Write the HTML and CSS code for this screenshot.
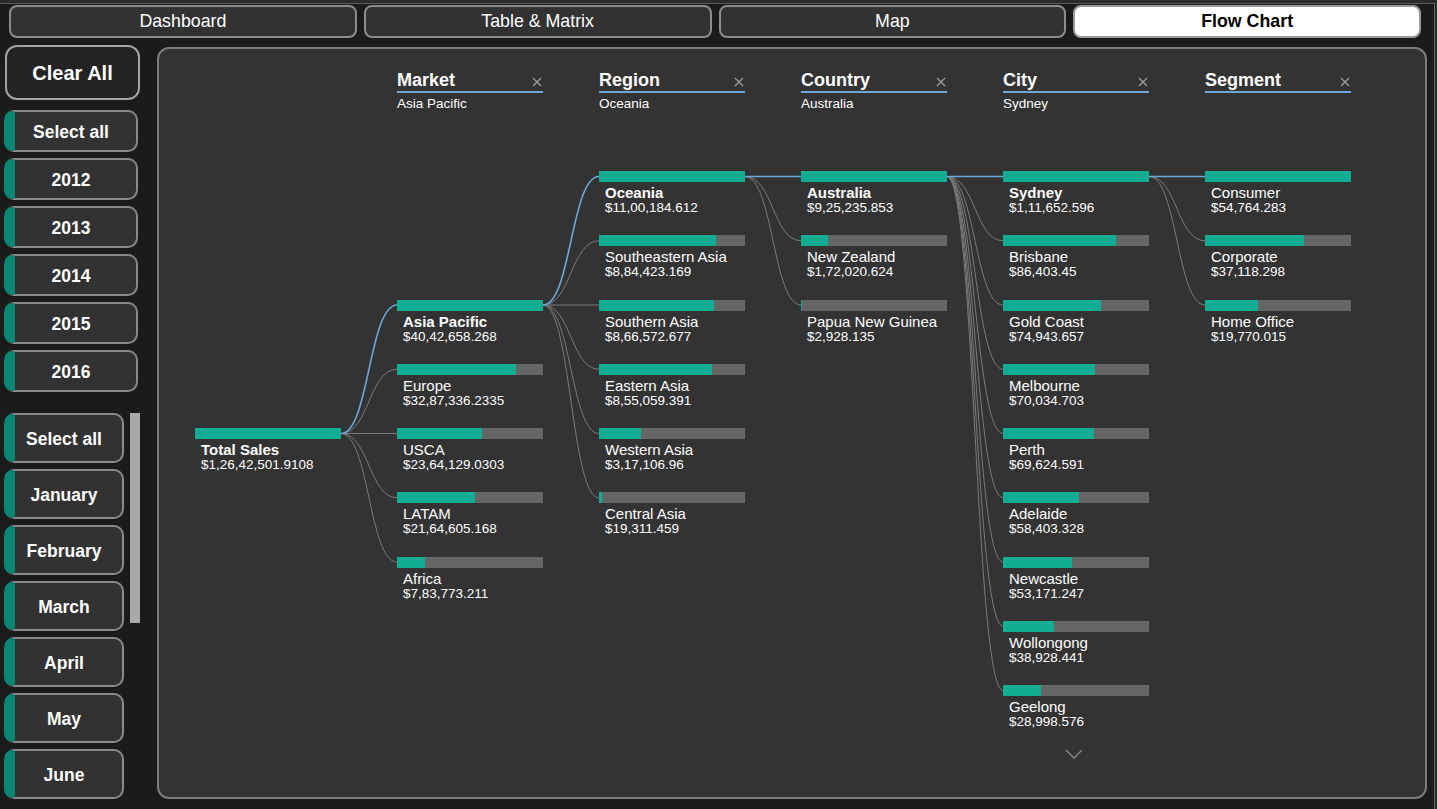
FILE: index.html
```html
<!DOCTYPE html>
<html>
<head>
<meta charset="utf-8">
<link rel="stylesheet" href="styles.css">
</head>
<body>
<div class="app">
  <nav class="tabs">
    <div class="tab">Dashboard</div>
    <div class="tab">Table &amp; Matrix</div>
    <div class="tab">Map</div>
    <div class="tab active">Flow Chart</div>
  </nav>
  <div class="main">
    <aside class="sidebar">
      <div class="clear">Clear All</div>
      <div class="years">
        <div class="slicer year">Select all</div>
        <div class="slicer year">2012</div>
        <div class="slicer year">2013</div>
        <div class="slicer year">2014</div>
        <div class="slicer year">2015</div>
        <div class="slicer year">2016</div>
      </div>
      <div class="months-wrap">
        <div class="months">
          <div class="slicer month">Select all</div>
          <div class="slicer month">January</div>
          <div class="slicer month">February</div>
          <div class="slicer month">March</div>
          <div class="slicer month">April</div>
          <div class="slicer month">May</div>
          <div class="slicer month">June</div>
        </div>
        <div class="scrolltrack"><div class="thumb"></div></div>
      </div>
    </aside>
    <section class="panel">
      <div class="headers">
        <div></div>
        <div class="hdr"><div class="hdr-top"><span>Market</span><svg class="x" viewBox="0 0 10 10"><path d="M1 1L9 9M9 1L1 9"/></svg></div><div class="hdr-sub">Asia Pacific</div></div>
        <div class="hdr"><div class="hdr-top"><span>Region</span><svg class="x" viewBox="0 0 10 10"><path d="M1 1L9 9M9 1L1 9"/></svg></div><div class="hdr-sub">Oceania</div></div>
        <div class="hdr"><div class="hdr-top"><span>Country</span><svg class="x" viewBox="0 0 10 10"><path d="M1 1L9 9M9 1L1 9"/></svg></div><div class="hdr-sub">Australia</div></div>
        <div class="hdr"><div class="hdr-top"><span>City</span><svg class="x" viewBox="0 0 10 10"><path d="M1 1L9 9M9 1L1 9"/></svg></div><div class="hdr-sub">Sydney</div></div>
        <div class="hdr"><div class="hdr-top"><span>Segment</span><svg class="x" viewBox="0 0 10 10"><path d="M1 1L9 9M9 1L1 9"/></svg></div><div class="hdr-sub"></div></div>
      </div>
      <div class="chart">
        <svg class="links" width="1266" height="680" viewBox="0 0 1266 680">
          <g class="grey">
            <path d="M182 314.5C210 314.5 210 250.25 238 250.25"/>
            <path d="M182 314.5L238 314.5"/>
            <path d="M182 314.5C210 314.5 210 378.75 238 378.75"/>
            <path d="M182 314.5C210 314.5 210 443 238 443"/>
            <path d="M384 186C412 186 412 121.75 440 121.75"/>
            <path d="M384 186L440 186"/>
            <path d="M384 186C412 186 412 250.25 440 250.25"/>
            <path d="M384 186C412 186 412 314.5 440 314.5"/>
            <path d="M384 186C412 186 412 378.75 440 378.75"/>
            <path d="M586 57.5C614 57.5 614 121.75 642 121.75"/>
            <path d="M586 57.5C614 57.5 614 186 642 186"/>
            <path d="M788 57.5C816 57.5 816 121.75 844 121.75"/>
            <path d="M788 57.5C816 57.5 816 186 844 186"/>
            <path d="M788 57.5C816 57.5 816 250.25 844 250.25"/>
            <path d="M788 57.5C816 57.5 816 314.5 844 314.5"/>
            <path d="M788 57.5C816 57.5 816 378.75 844 378.75"/>
            <path d="M788 57.5C816 57.5 816 443 844 443"/>
            <path d="M788 57.5C816 57.5 816 507.25 844 507.25"/>
            <path d="M788 57.5C816 57.5 816 571.5 844 571.5"/>
            <path d="M990 57.5C1018 57.5 1018 121.75 1046 121.75"/>
            <path d="M990 57.5C1018 57.5 1018 186 1046 186"/>
          </g>
          <g class="blue">
            <path d="M182 314.5C210 314.5 210 186 238 186"/>
            <path d="M384 186C412 186 412 57.5 440 57.5"/>
            <path d="M586 57.5L642 57.5"/>
            <path d="M788 57.5L844 57.5"/>
            <path d="M990 57.5L1046 57.5"/>
          </g>
        </svg>
        <div class="col col-total">
          <div class="node sel"><div class="bar"><div class="fill" style="width:100%"></div></div><div class="name">Total Sales</div><div class="val">$1,26,42,501.9108</div></div>
        </div>
        <div class="col col-market">
          <div class="node sel"><div class="bar"><div class="fill" style="width:100%"></div></div><div class="name">Asia Pacific</div><div class="val">$40,42,658.268</div></div>
          <div class="node"><div class="bar"><div class="fill" style="width:81.3%"></div></div><div class="name">Europe</div><div class="val">$32,87,336.2335</div></div>
          <div class="node"><div class="bar"><div class="fill" style="width:58.5%"></div></div><div class="name">USCA</div><div class="val">$23,64,129.0303</div></div>
          <div class="node"><div class="bar"><div class="fill" style="width:53.5%"></div></div><div class="name">LATAM</div><div class="val">$21,64,605.168</div></div>
          <div class="node"><div class="bar"><div class="fill" style="width:19.4%"></div></div><div class="name">Africa</div><div class="val">$7,83,773.211</div></div>
        </div>
        <div class="col">
          <div class="node sel"><div class="bar"><div class="fill" style="width:100%"></div></div><div class="name">Oceania</div><div class="val">$11,00,184.612</div></div>
          <div class="node"><div class="bar"><div class="fill" style="width:80.4%"></div></div><div class="name">Southeastern Asia</div><div class="val">$8,84,423.169</div></div>
          <div class="node"><div class="bar"><div class="fill" style="width:78.8%"></div></div><div class="name">Southern Asia</div><div class="val">$8,66,572.677</div></div>
          <div class="node"><div class="bar"><div class="fill" style="width:77.7%"></div></div><div class="name">Eastern Asia</div><div class="val">$8,55,059.391</div></div>
          <div class="node"><div class="bar"><div class="fill" style="width:28.8%"></div></div><div class="name">Western Asia</div><div class="val">$3,17,106.96</div></div>
          <div class="node"><div class="bar"><div class="fill" style="width:1.8%"></div></div><div class="name">Central Asia</div><div class="val">$19,311.459</div></div>
        </div>
        <div class="col">
          <div class="node sel"><div class="bar"><div class="fill" style="width:100%"></div></div><div class="name">Australia</div><div class="val">$9,25,235.853</div></div>
          <div class="node"><div class="bar"><div class="fill" style="width:18.6%"></div></div><div class="name">New Zealand</div><div class="val">$1,72,020.624</div></div>
          <div class="node"><div class="bar"><div class="fill" style="width:0.3%"></div></div><div class="name">Papua New Guinea</div><div class="val">$2,928.135</div></div>
        </div>
        <div class="col">
          <div class="node sel"><div class="bar"><div class="fill" style="width:100%"></div></div><div class="name">Sydney</div><div class="val">$1,11,652.596</div></div>
          <div class="node"><div class="bar"><div class="fill" style="width:77.4%"></div></div><div class="name">Brisbane</div><div class="val">$86,403.45</div></div>
          <div class="node"><div class="bar"><div class="fill" style="width:67.1%"></div></div><div class="name">Gold Coast</div><div class="val">$74,943.657</div></div>
          <div class="node"><div class="bar"><div class="fill" style="width:62.7%"></div></div><div class="name">Melbourne</div><div class="val">$70,034.703</div></div>
          <div class="node"><div class="bar"><div class="fill" style="width:62.4%"></div></div><div class="name">Perth</div><div class="val">$69,624.591</div></div>
          <div class="node"><div class="bar"><div class="fill" style="width:52.3%"></div></div><div class="name">Adelaide</div><div class="val">$58,403.328</div></div>
          <div class="node"><div class="bar"><div class="fill" style="width:47.6%"></div></div><div class="name">Newcastle</div><div class="val">$53,171.247</div></div>
          <div class="node"><div class="bar"><div class="fill" style="width:34.9%"></div></div><div class="name">Wollongong</div><div class="val">$38,928.441</div></div>
          <div class="node"><div class="bar"><div class="fill" style="width:26%"></div></div><div class="name">Geelong</div><div class="val">$28,998.576</div></div>
          <div class="more"><svg width="18" height="10" viewBox="0 0 18 10"><path d="M1 1L9 9L17 1"/></svg></div>
        </div>
        <div class="col">
          <div class="node"><div class="bar"><div class="fill" style="width:100%"></div></div><div class="name">Consumer</div><div class="val">$54,764.283</div></div>
          <div class="node"><div class="bar"><div class="fill" style="width:67.8%"></div></div><div class="name">Corporate</div><div class="val">$37,118.298</div></div>
          <div class="node"><div class="bar"><div class="fill" style="width:36.1%"></div></div><div class="name">Home Office</div><div class="val">$19,770.015</div></div>
        </div>
      </div>
    </section>
  </div>
</div>
</body>
</html>
```

FILE: styles.css
```css
* { box-sizing: border-box; }
html, body {
  margin: 0;
  padding: 0;
  background: #2b2b2b;
  font-family: "Liberation Sans", Arial, sans-serif;
  color: #fff;
}
.app {
  margin-top: 3px;
  width: 1435px;
  height: 806px;
  background: #1b1b1b;
  border-top: 1px solid #5c5c5c;
  border-right: 1px solid #6a6a6a;
  overflow: hidden;
}
.tabs {
  display: flex;
  gap: 7px;
  width: 1421px;
  padding: 1px 0 0 9px;
}
.tab {
  flex: 1;
  height: 33px;
  border: 2px solid #8d8d8d;
  border-radius: 8px;
  background: #323232;
  display: flex;
  align-items: center;
  justify-content: center;
  font-size: 17.8px;
  color: #fff;
}
.tab.active {
  background: #fff;
  color: #000;
  font-weight: bold;
  border-color: #9a9a9a;
}
.main {
  display: flex;
  padding-left: 4px;
  margin-top: 7px;
}
.sidebar {
  width: 136px;
  display: flex;
  flex-direction: column;
}
.clear {
  margin-left: 1px;
  width: 135px;
  height: 55px;
  border: 2px solid #a3a3a3;
  border-radius: 12px;
  background: #232323;
  display: flex;
  align-items: center;
  justify-content: center;
  padding-top: 1px;
  font-weight: bold;
  font-size: 20px;
}
.years {
  margin-top: 10px;
  display: flex;
  flex-direction: column;
  gap: 6px;
}
.slicer {
  background: #323232;
  border: 2px solid #8a8a8a;
  border-left: 11px solid #0c8571;
  border-radius: 10px;
  display: flex;
  align-items: center;
  justify-content: center;
  padding: 2px 9px 0 0;
  font-weight: bold;
  font-size: 17.5px;
  flex-shrink: 0;
}
.year {
  width: 134px;
  height: 42px;
}
.months-wrap {
  margin-top: 21px;
  display: flex;
  gap: 6px;
  height: 390px;
  overflow: hidden;
}
.months {
  display: flex;
  flex-direction: column;
  gap: 6px;
}
.month {
  width: 120px;
  height: 50px;
}
.scrolltrack {
  width: 10px;
}
.thumb {
  width: 10px;
  height: 210px;
  background: #a9a9a9;
}
.panel {
  margin-left: 17px;
  margin-top: 2px;
  width: 1270px;
  height: 752px;
  border: 2px solid #7c7c7c;
  border-radius: 12px;
  background: #333333;
  padding: 20px 0 0 36px;
}
.headers {
  display: grid;
  grid-template-columns: repeat(6, 146px);
  column-gap: 56px;
}
.hdr-top {
  height: 24px;
  border-bottom: 2px solid #6ea6d8;
  display: flex;
  justify-content: space-between;
  align-items: center;
  font-weight: bold;
  font-size: 18px;
}
.hdr-top span { line-height: 22px; }
.x {
  width: 10px;
  height: 10px;
  margin-right: 1px;
  margin-top: 4px;
  fill: none;
  stroke: #999;
  stroke-width: 1.4;
}
.hdr-sub {
  margin-top: 3px;
  font-size: 13.5px;
  line-height: 15px;
  height: 15px;
}
.chart {
  position: relative;
  margin-top: 8px;
  margin-left: -36px;
  padding-left: 36px;
  display: flex;
  gap: 56px;
  height: 675px;
}
.links {
  position: absolute;
  left: 0;
  top: 0;
  overflow: visible;
}
.links path { fill: none; }
.grey path { stroke: #7b7b7b; stroke-width: 1; }
.blue path { stroke: #6ea6d8; stroke-width: 1.6; }
.col {
  position: relative;
  width: 146px;
  padding-top: 52px;
  display: flex;
  flex-direction: column;
}
.col-total { padding-top: 309px; }
.col-market { padding-top: 180.5px; }
.node {
  height: 64.25px;
  flex-shrink: 0;
}
.bar {
  height: 11px;
  background: #666;
  display: flex;
}
.fill {
  height: 100%;
  background: #10ad92;
}
.name, .val {
  padding-left: 6px;
  line-height: 14px;
  white-space: nowrap;
}
.name { margin-top: 4px; font-size: 15px; }
.val { margin-top: 1px; font-size: 13.5px; }
.sel .name { font-weight: bold; }
.more {
  display: flex;
  justify-content: center;
  margin-top: 0;
  padding-right: 4px;
}
.more svg {
  fill: none;
  stroke: #8a8a8a;
  stroke-width: 1.3;
}
```
